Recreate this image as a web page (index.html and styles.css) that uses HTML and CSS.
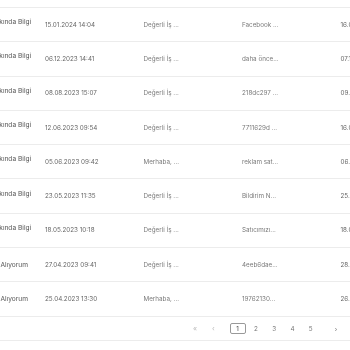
FILE: index.html
```html
<!DOCTYPE html>
<html lang="tr">
<head>
    <meta charset="UTF-8">
    <meta name="viewport" content="width=device-width, initial-scale=1.0">
    <title>Mesajlar</title>
    <link rel="stylesheet" href="styles.css">
</head>
<body>
    <div class="messages">
        <div class="row">
            <span class="subject">Ürün Hakkında Bilgi</span>
            <span class="date">15.01.2024 14:04</span>
            <span class="text">Değerli İş ...</span>
            <span class="text">Facebook ...</span>
            <span class="date">16.01.2024 10:12</span>
        </div>
        <div class="row">
            <span class="subject">Ürün Hakkında Bilgi</span>
            <span class="date">06.12.2023 14:41</span>
            <span class="text">Değerli İş ...</span>
            <span class="text">daha önce...</span>
            <span class="date">07.12.2023 09:30</span>
        </div>
        <div class="row">
            <span class="subject">Ürün Hakkında Bilgi</span>
            <span class="date">08.08.2023 15:07</span>
            <span class="text">Değerli İş ...</span>
            <span class="text">218dc297 ...</span>
            <span class="date">09.08.2023 11:20</span>
        </div>
        <div class="row">
            <span class="subject">Ürün Hakkında Bilgi</span>
            <span class="date">12.06.2023 09:54</span>
            <span class="text">Değerli İş ...</span>
            <span class="text">7711629d ...</span>
            <span class="date">16.06.2023 13:02</span>
        </div>
        <div class="row">
            <span class="subject">Ürün Hakkında Bilgi</span>
            <span class="date">05.06.2023 09:42</span>
            <span class="text">Merhaba, ...</span>
            <span class="text">reklam sat...</span>
            <span class="date">06.06.2023 10:15</span>
        </div>
        <div class="row">
            <span class="subject">Ürün Hakkında Bilgi</span>
            <span class="date">23.05.2023 11:35</span>
            <span class="text">Değerli İş ...</span>
            <span class="text">Bildirim N...</span>
            <span class="date">25.05.2023 08:47</span>
        </div>
        <div class="row">
            <span class="subject">Ürün Hakkında Bilgi</span>
            <span class="date">18.05.2023 10:18</span>
            <span class="text">Değerli İş ...</span>
            <span class="text">Satıcımızı...</span>
            <span class="date">18.05.2023 16:40</span>
        </div>
        <div class="row">
            <span class="subject short">Ürün Satın Alıyorum</span>
            <span class="date">27.04.2023 09:41</span>
            <span class="text">Değerli İş ...</span>
            <span class="text">4eeb6dae...</span>
            <span class="date">28.04.2023 12:05</span>
        </div>
        <div class="row">
            <span class="subject short">Ürün Satın Alıyorum</span>
            <span class="date">25.04.2023 13:30</span>
            <span class="text">Merhaba, ...</span>
            <span class="text">19762130...</span>
            <span class="date">26.04.2023 09:18</span>
        </div>
        <div class="pagination">
            <span class="page muted">«</span>
            <span class="page muted">‹</span>
            <span class="page current">1</span>
            <span class="page">2</span>
            <span class="page">3</span>
            <span class="page">4</span>
            <span class="page">5</span>
            <span class="page next">›</span>
        </div>
    </div>
</body>
</html>
```

FILE: styles.css
```css
body {
    margin: 0;
    background-color: white;
    font-family: 'Inter', sans-serif;
    overflow: hidden;
}
.messages {
    width: 480px;
    margin-left: -50px;
    padding-top: 7px;
    will-change: transform;
}
.row {
    display: grid;
    grid-template-columns: 87px 98.5px 98.5px 98.5px 98.5px;
    align-items: center;
    height: 34.3px;
    box-sizing: border-box;
    border-top: 1px solid #ececec;
    font-size: 6.3px;
    color: #7a7a7a;
}
.row span {
    padding-left: 8px;
    white-space: nowrap;
}
.row .subject {
    color: #555;
    margin-top: -5px;
    padding-left: 20px;
    font-size: 6.6px;
}
.row .short {
    margin-top: 0;
    padding-left: 16px;
}
.date {
    color: #666;
}
.pagination {
    display: flex;
    align-items: center;
    gap: 2.3px;
    height: 25.7px;
    box-sizing: border-box;
    padding-left: 237px;
    border-top: 1px solid #ececec;
    border-bottom: 1px solid #ececec;
    font-size: 6.3px;
    color: #777;
}
.page {
    width: 16px;
    height: 11px;
    display: flex;
    align-items: center;
    justify-content: center;
    box-sizing: border-box;
}
.muted {
    color: #bbb;
    font-size: 7px;
}
.current {
    margin-left: 6px;
    border: 1px solid #999;
    border-radius: 2px;
    color: #444;
}
.next {
    margin-left: 7px;
}
```
